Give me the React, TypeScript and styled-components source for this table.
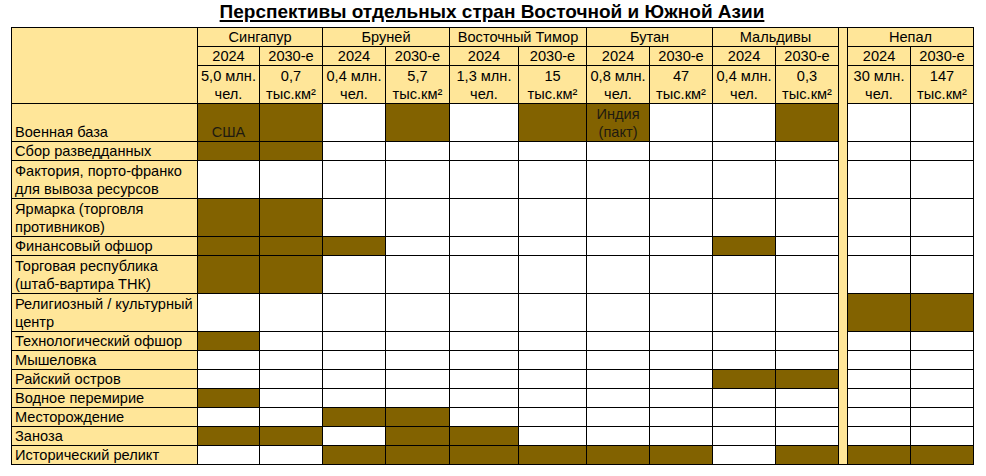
import React from 'react';
import styled, { createGlobalStyle } from 'styled-components';

const Global = createGlobalStyle`
  html, body { margin: 0; padding: 0; background: #ffffff; }
  body { font-family: "Liberation Sans", Arial, sans-serif; color: #000; }
`;

const YELLOW = '#FFE699';
const BROWN = '#826200';

const Page = styled.div`
  width: 986px;
  height: 476px;
  box-sizing: border-box;
  padding-left: 11px;
`;

const Title = styled.h1`
  margin: 0;
  width: 962px;
  height: 27px;
  box-sizing: border-box;
  padding-top: 1px;
  font-size: 19px;
  line-height: 21px;
  font-weight: bold;
  text-align: center;
  text-decoration: underline;
  text-underline-offset: 2px;
  text-decoration-thickness: 1.5px;
  white-space: nowrap;
`;

const Table = styled.table`
  border-collapse: collapse;
  table-layout: fixed;
  width: 962px;
  font-size: 14.6px;
  line-height: 18px;
`;

const Cell = styled.td<{ $fill?: 'y' | 'b' | 'w'; $h?: number; $align?: 'left' | 'center'; $valign?: 'bottom' | 'middle' | 'top' }>`
  border: 1px solid #000;
  padding: 0 0 0 ${(p) => (p.$align === 'left' ? '3px' : '0')};
  height: ${(p) => (p.$h ? `${p.$h - 1}px` : 'auto')};
  background: ${(p) => (p.$fill === 'y' ? YELLOW : p.$fill === 'b' ? BROWN : '#ffffff')};
  text-align: ${(p) => p.$align || 'center'};
  vertical-align: ${(p) => p.$valign || 'bottom'};
  white-space: nowrap;
  overflow: hidden;
  color: ${(p) => (p.$fill === 'b' ? '#1e1a10' : '#000')};
`;

const Gap = styled.td`
  background: ${YELLOW};
  border: 1px solid #000;
  padding: 0;
`;

const widths = [186, 62, 63, 63, 64, 69, 68, 63, 63, 63, 63, 9, 63, 63];

const countries = ['Сингапур', 'Бруней', 'Восточный Тимор', 'Бутан', 'Мальдивы'];

const stats: [string, string][] = [
  ['5,0 млн.', 'чел.'],
  ['0,7', 'тыс.км²'],
  ['0,4 млн.', 'чел.'],
  ['5,7', 'тыс.км²'],
  ['1,3 млн.', 'чел.'],
  ['15', 'тыс.км²'],
  ['0,8 млн.', 'чел.'],
  ['47', 'тыс.км²'],
  ['0,4 млн.', 'чел.'],
  ['0,3', 'тыс.км²'],
  ['30 млн.', 'чел.'],
  ['147', 'тыс.км²'],
];

type Row = { label: string[]; h: number; fills: number[]; texts?: Record<number, string[]> };

const rows: Row[] = [
  { label: ['Военная база'], h: 38, fills: [1, 1, 0, 1, 0, 1, 1, 0, 0, 1, 0, 0], texts: { 0: ['США'], 6: ['Индия', '(пакт)'] } },
  { label: ['Сбор разведданных'], h: 19, fills: [1, 1, 0, 0, 0, 0, 0, 0, 0, 0, 0, 0] },
  { label: ['Фактория, порто-франко', 'для вывоза ресурсов'], h: 38, fills: [0, 0, 0, 0, 0, 0, 0, 0, 0, 0, 0, 0] },
  { label: ['Ярмарка (торговля', 'противников)'], h: 38, fills: [1, 1, 0, 0, 0, 0, 0, 0, 0, 0, 0, 0] },
  { label: ['Финансовый офшор'], h: 18, fills: [1, 1, 1, 0, 0, 0, 0, 0, 1, 0, 0, 0] },
  { label: ['Торговая республика', '(штаб-вартира ТНК)'], h: 38, fills: [1, 1, 0, 0, 0, 0, 0, 0, 0, 0, 0, 0] },
  { label: ['Религиозный / культурный', 'центр'], h: 38, fills: [0, 0, 0, 0, 0, 0, 0, 0, 0, 0, 1, 1] },
  { label: ['Технологический офшор'], h: 19, fills: [1, 0, 0, 0, 0, 0, 0, 0, 0, 0, 0, 0] },
  { label: ['Мышеловка'], h: 19, fills: [0, 0, 0, 0, 0, 0, 0, 0, 0, 0, 0, 0] },
  { label: ['Райский остров'], h: 19, fills: [0, 0, 0, 0, 0, 0, 0, 0, 1, 1, 0, 0] },
  { label: ['Водное перемирие'], h: 19, fills: [1, 0, 0, 0, 0, 0, 0, 0, 0, 0, 0, 0] },
  { label: ['Месторождение'], h: 19, fills: [0, 0, 1, 1, 0, 0, 0, 0, 0, 0, 0, 0] },
  { label: ['Заноза'], h: 19, fills: [1, 1, 0, 1, 1, 0, 0, 0, 0, 0, 0, 0] },
  { label: ['Исторический реликт'], h: 19, fills: [0, 0, 1, 1, 1, 1, 1, 1, 0, 1, 1, 1] },
];

const Lines: React.FC<{ lines: string[] }> = ({ lines }) => (
  <>
    {lines.map((l, i) => (
      <React.Fragment key={i}>
        {i > 0 && <br />}
        {l}
      </React.Fragment>
    ))}
  </>
);

export default function App() {
  const years = Array.from({ length: 12 }, (_, i) => (i % 2 === 0 ? '2024' : '2030-е'));
  return (
    <Page>
      <Global />
      <Title>Перспективы отдельных стран Восточной и Южной Азии</Title>
      <Table>
        <colgroup>
          {widths.map((w, i) => (
            <col key={i} style={{ width: w }} />
          ))}
        </colgroup>
        <tbody>
          <tr>
            <Cell $fill="y" rowSpan={3} $h={76} />
            {countries.map((c) => (
              <Cell key={c} $fill="y" colSpan={2} $h={19}>
                {c}
              </Cell>
            ))}
            <Gap rowSpan={17} />
            <Cell $fill="y" colSpan={2} $h={19}>
              Непал
            </Cell>
          </tr>
          <tr>
            {years.map((y, i) => (
              <Cell key={i} $fill="y" $h={19}>
                {y}
              </Cell>
            ))}
          </tr>
          <tr>
            {stats.map((s, i) => (
              <Cell key={i} $fill="y" $h={38}>
                <Lines lines={s} />
              </Cell>
            ))}
          </tr>
          {rows.map((r, ri) => (
            <tr key={ri}>
              <Cell $fill="y" $h={r.h} $align="left">
                <Lines lines={r.label} />
              </Cell>
              {r.fills.map((f, ci) => (
                <Cell key={ci} $fill={f ? 'b' : 'w'} $h={r.h}>
                  {r.texts && r.texts[ci] ? <Lines lines={r.texts[ci]} /> : null}
                </Cell>
              ))}
            </tr>
          ))}
        </tbody>
      </Table>
    </Page>
  );
}
